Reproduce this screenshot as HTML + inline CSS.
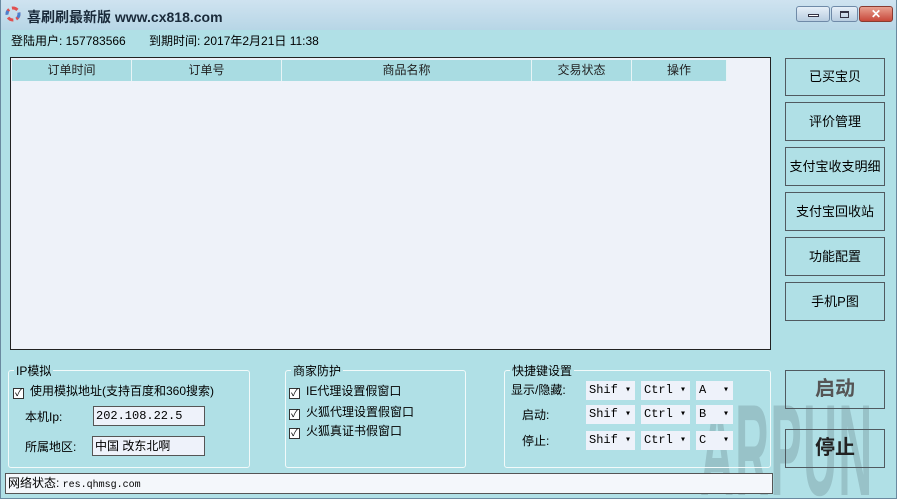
<!DOCTYPE html>
<html style="width:897px;height:499px;overflow:hidden"><head><meta charset="utf-8"><style>
*{margin:0;padding:0;box-sizing:border-box}
body{width:897px;height:499px;background:#b0e0e6;font-family:"Liberation Sans","Noto Sans CJK SC",sans-serif;font-size:12px;color:#000;position:relative;overflow:hidden}
.a{position:absolute}
.frame{left:0;top:0;width:897px;height:499px;border:1px solid #6a8aa0;border-top:none}
.title{left:0;top:0;width:897px;height:30px;background:linear-gradient(#cfe3f0,#b7d6e6)}
.btn{position:absolute;left:785px;width:100px;border:1px solid #505a60;text-align:center;font-size:13px}
.hd{position:absolute;top:60px;height:21px;border-right:1px solid #e8f4f6;background:#a9dce2;text-align:center;line-height:20px;font-size:12px;color:#222}
.grp{position:absolute;border:1px solid #f2fafa;border-radius:3px}
.lg{position:absolute;top:-9px;left:5px;background:#b0e0e6;padding:0 2px;font-size:12px}
.cb{display:inline-block;width:11px;height:11px;border:1px solid #333;background:#fff;font-size:10px;line-height:9px;text-align:center;vertical-align:-1px;margin-right:6px}
.inp{position:absolute;background:#eef2fa;border:1px solid #555;font-size:12px;padding-left:2px;line-height:18px}
.dd{position:absolute;background:#eef2fa;height:19px;font-family:"Liberation Mono",monospace;font-size:12px;line-height:19px;padding-left:3px}
.dd:after{content:"▾";position:absolute;right:4px;font-size:10px}
</style></head><body>
<div class="a title"></div>
<svg class="a" style="left:5px;top:6px" width="16" height="16" viewBox="0 0 16 16"><circle cx="8" cy="8" r="6" fill="none" stroke="#e05050" stroke-width="3" stroke-dasharray="6 3"/><circle cx="8" cy="8" r="6" fill="none" stroke="#4a80d0" stroke-width="3" stroke-dasharray="4 14" /></svg>
<div class="a" style="left:27px;top:7px;font-size:14px;font-weight:bold;color:#1a2a3a">喜刷刷最新版 www.cx818.com</div>
<div class="a" style="left:796px;top:6px;width:34px;height:16px;border:1px solid #6f8aa8;border-radius:3px;background:linear-gradient(#e6eff8,#b8cde0)"><div class="a" style="left:11px;top:7px;width:11px;height:3px;background:#fff;border:1px solid #334"></div></div>
<div class="a" style="left:831px;top:6px;width:27px;height:16px;border:1px solid #6f8aa8;border-radius:3px;background:linear-gradient(#e6eff8,#b8cde0)"><div class="a" style="left:8px;top:4px;width:9px;height:7px;border:1px solid #334;border-top-width:2px"></div></div>
<div class="a" style="left:859px;top:6px;width:34px;height:16px;border:1px solid #8a3a30;border-radius:3px;background:linear-gradient(#e8a090,#c8483a);color:#fff;font-weight:bold;text-align:center;line-height:14px">✕</div>
<div class="a" style="left:11px;top:32px;font-size:12px">登陆用户: 157783566</div>
<div class="a" style="left:149px;top:32px;font-size:12px">到期时间: 2017年2月21日 11:38</div>
<div class="a" style="left:10px;top:57px;width:761px;height:293px;border:1px solid #222;background:#eef2f9"></div>
<div class="hd" style="left:12px;width:120px">订单时间</div>
<div class="hd" style="left:132px;width:150px">订单号</div>
<div class="hd" style="left:282px;width:250px">商品名称</div>
<div class="hd" style="left:532px;width:100px">交易状态</div>
<div class="hd" style="left:632px;width:95px">操作</div>
<div class="btn" style="top:58px;height:38px;line-height:36px">已买宝贝</div>
<div class="btn" style="top:102px;height:39px;line-height:37px">评价管理</div>
<div class="btn" style="top:147px;height:39px;line-height:37px">支付宝收支明细</div>
<div class="btn" style="top:192px;height:39px;line-height:37px">支付宝回收站</div>
<div class="btn" style="top:237px;height:39px;line-height:37px">功能配置</div>
<div class="btn" style="top:282px;height:39px;line-height:37px">手机P图</div>
<div class="a" style="left:0;top:0;width:897px;height:499px;overflow:hidden"><div class="a" style="left:700px;top:385px;white-space:nowrap;font-size:130px;font-weight:bold;color:#98c2c8;line-height:130px;transform:scaleX(0.36);transform-origin:0 0;letter-spacing:4px">ARPUN</div></div>
<div class="a frame"></div>
<div class="btn" style="top:370px;height:39px;line-height:37px;font-size:20px;font-weight:bold;color:#555">启动</div>
<div class="btn" style="top:429px;height:39px;line-height:37px;font-size:20px;font-weight:bold;color:#222">停止</div>
<div class="grp" style="left:8px;top:370px;width:242px;height:98px"><div class="lg">IP模拟</div></div>
<div class="a" style="left:13px;top:382px"><span class="cb">✓</span>使用模拟地址(支持百度和360搜索)</div>
<div class="a" style="left:25px;top:408px">本机Ip:</div>
<div class="inp" style="left:93px;top:406px;width:112px;height:20px;font-family:'Liberation Mono',monospace">202.108.22.5</div>
<div class="a" style="left:25px;top:438px">所属地区:</div>
<div class="inp" style="left:92px;top:436px;width:113px;height:20px">中国 改东北啊</div>
<div class="grp" style="left:285px;top:370px;width:181px;height:98px"><div class="lg">商家防护</div></div>
<div class="a" style="left:289px;top:382px"><span class="cb">✓</span>IE代理设置假窗口</div>
<div class="a" style="left:289px;top:403px"><span class="cb">✓</span>火狐代理设置假窗口</div>
<div class="a" style="left:289px;top:422px"><span class="cb">✓</span>火狐真证书假窗口</div>
<div class="grp" style="left:504px;top:370px;width:267px;height:98px"><div class="lg">快捷键设置</div></div>
<div class="a" style="left:511px;top:381px">显示/隐藏:</div>
<div class="a" style="left:522px;top:406px">启动:</div>
<div class="a" style="left:522px;top:432px">停止:</div>
<div class="dd" style="left:586px;top:381px;width:49px">Shif</div>
<div class="dd" style="left:641px;top:381px;width:49px">Ctrl</div>
<div class="dd" style="left:696px;top:381px;width:37px">A</div>
<div class="dd" style="left:586px;top:405px;width:49px">Shif</div>
<div class="dd" style="left:641px;top:405px;width:49px">Ctrl</div>
<div class="dd" style="left:696px;top:405px;width:37px">B</div>
<div class="dd" style="left:586px;top:431px;width:49px">Shif</div>
<div class="dd" style="left:641px;top:431px;width:49px">Ctrl</div>
<div class="dd" style="left:696px;top:431px;width:37px">C</div>
<div class="a" style="left:5px;top:473px;width:768px;height:21px;background:#f4f7fb;border:1px solid #555;line-height:19px;padding-left:2px">网络状态: <span style="font-family:'Liberation Mono',monospace;font-size:10px">res.qhmsg.com</span></div>
</body></html>
